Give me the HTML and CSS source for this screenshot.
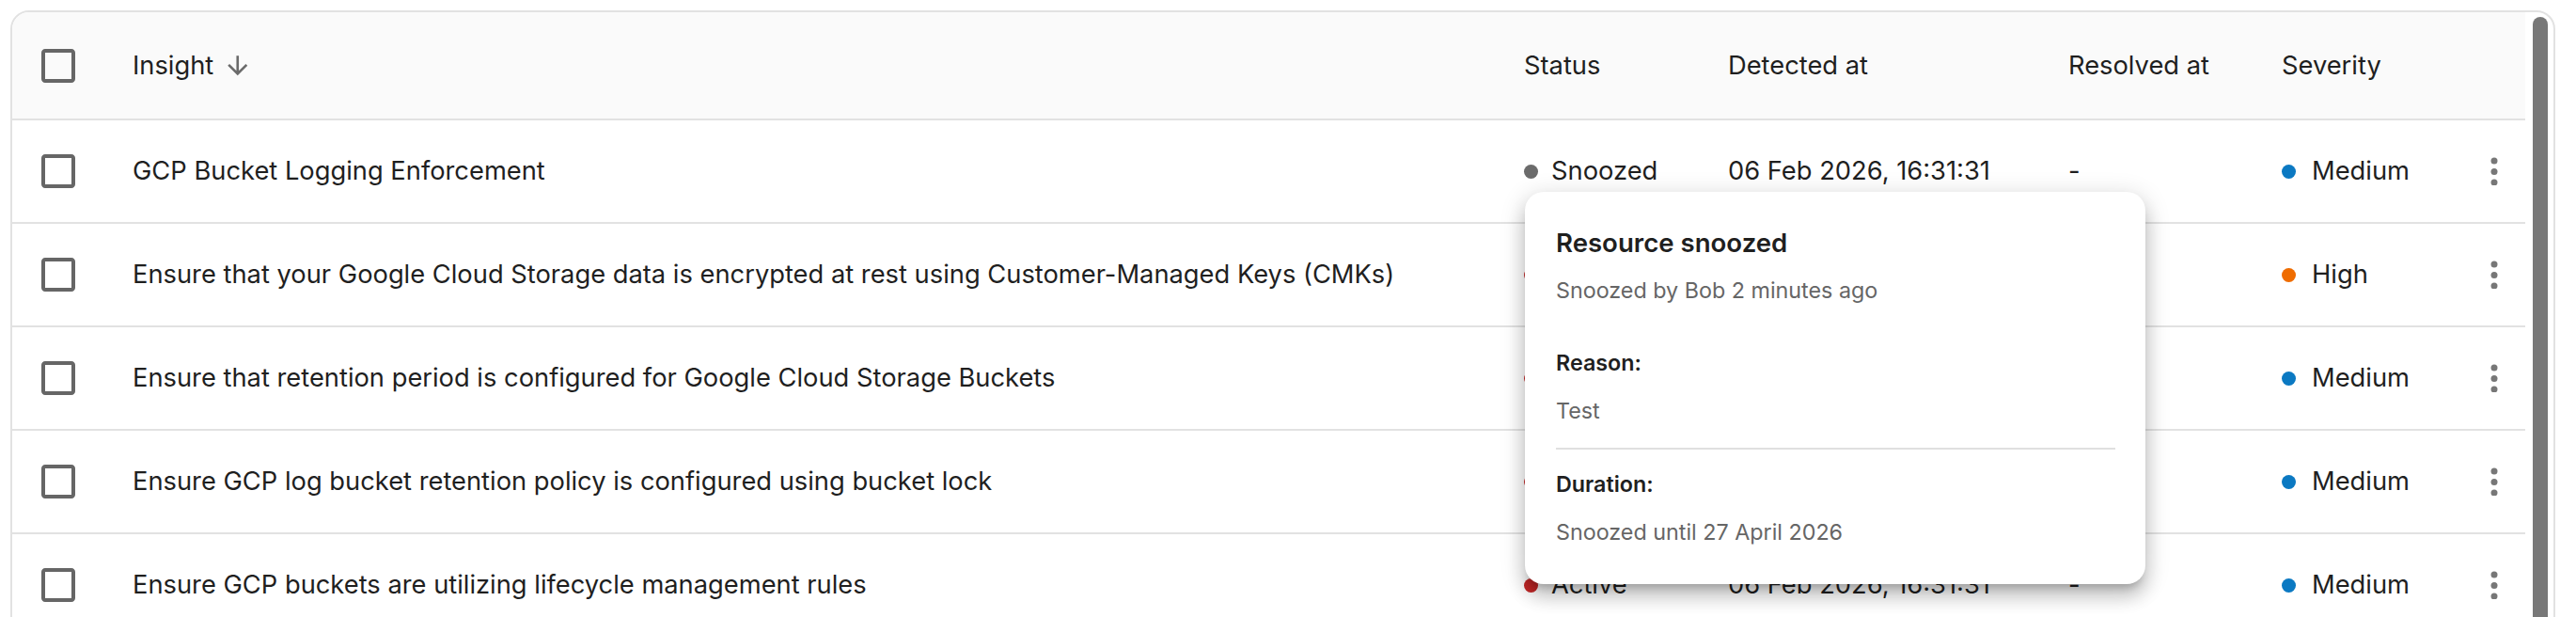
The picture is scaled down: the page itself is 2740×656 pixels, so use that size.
FILE: index.html
```html
<!DOCTYPE html>
<html lang="en">
<head>
<meta charset="utf-8">
<title>Insights</title>
<link rel="stylesheet" href="styles.css">
</head>
<body>
<div class="page">
  <div class="card">
    <div class="table">
      <div class="row head">
        <div class="cell cb"><svg class="check" viewBox="0 0 24 24"><path d="M19 5v14H5V5h14m0-2H5c-1.1 0-2 .9-2 2v14c0 1.1.9 2 2 2h14c1.1 0 2-.9 2-2V5c0-1.1-.9-2-2-2z"/></svg></div>
        <div class="cell insight">Insight <svg class="sort" viewBox="0 0 24 24"><path d="m20 12-1.410-1.410L13 16.170V4h-2v12.170l-5.580-5.590L4 12l8 8 8-8z"/></svg></div>
        <div class="cell">Status</div>
        <div class="cell">Detected at</div>
        <div class="cell">Resolved at</div>
        <div class="cell">Severity</div>
        <div class="cell"></div>
      </div>

      <div class="row">
        <div class="cell cb"><svg class="check" viewBox="0 0 24 24"><path d="M19 5v14H5V5h14m0-2H5c-1.1 0-2 .9-2 2v14c0 1.1.9 2 2 2h14c1.1 0 2-.9 2-2V5c0-1.1-.9-2-2-2z"/></svg></div>
        <div class="cell">GCP Bucket Logging Enforcement</div>
        <div class="cell status"><span class="dot dot-snoozed"></span>Snoozed</div>
        <div class="cell">06 Feb 2026, 16:31:31</div>
        <div class="cell">-</div>
        <div class="cell sev"><span class="dot dot-medium"></span>Medium</div>
        <div class="cell act"><svg class="kebab" viewBox="0 0 8 30"><circle cx="4" cy="4" r="3.5"/><circle cx="4" cy="15.5" r="3.5"/><circle cx="4" cy="27" r="3.5"/></svg></div>
      </div>

      <div class="row">
        <div class="cell cb"><svg class="check" viewBox="0 0 24 24"><path d="M19 5v14H5V5h14m0-2H5c-1.1 0-2 .9-2 2v14c0 1.1.9 2 2 2h14c1.1 0 2-.9 2-2V5c0-1.1-.9-2-2-2z"/></svg></div>
        <div class="cell">Ensure that your Google Cloud Storage data is encrypted at rest using Customer-Managed Keys (CMKs)</div>
        <div class="cell status"><span class="dot dot-active"></span>Active</div>
        <div class="cell">06 Feb 2026, 16:31:31</div>
        <div class="cell">-</div>
        <div class="cell sev"><span class="dot dot-high"></span>High</div>
        <div class="cell act"><svg class="kebab" viewBox="0 0 8 30"><circle cx="4" cy="4" r="3.5"/><circle cx="4" cy="15.5" r="3.5"/><circle cx="4" cy="27" r="3.5"/></svg></div>
      </div>

      <div class="row">
        <div class="cell cb"><svg class="check" viewBox="0 0 24 24"><path d="M19 5v14H5V5h14m0-2H5c-1.1 0-2 .9-2 2v14c0 1.1.9 2 2 2h14c1.1 0 2-.9 2-2V5c0-1.1-.9-2-2-2z"/></svg></div>
        <div class="cell">Ensure that retention period is configured for Google Cloud Storage Buckets</div>
        <div class="cell status"><span class="dot dot-active"></span>Active</div>
        <div class="cell">06 Feb 2026, 16:31:31</div>
        <div class="cell">-</div>
        <div class="cell sev"><span class="dot dot-medium"></span>Medium</div>
        <div class="cell act"><svg class="kebab" viewBox="0 0 8 30"><circle cx="4" cy="4" r="3.5"/><circle cx="4" cy="15.5" r="3.5"/><circle cx="4" cy="27" r="3.5"/></svg></div>
      </div>

      <div class="row">
        <div class="cell cb"><svg class="check" viewBox="0 0 24 24"><path d="M19 5v14H5V5h14m0-2H5c-1.1 0-2 .9-2 2v14c0 1.1.9 2 2 2h14c1.1 0 2-.9 2-2V5c0-1.1-.9-2-2-2z"/></svg></div>
        <div class="cell">Ensure GCP log bucket retention policy is configured using bucket lock</div>
        <div class="cell status"><span class="dot dot-active"></span>Active</div>
        <div class="cell">06 Feb 2026, 16:31:31</div>
        <div class="cell">-</div>
        <div class="cell sev"><span class="dot dot-medium"></span>Medium</div>
        <div class="cell act"><svg class="kebab" viewBox="0 0 8 30"><circle cx="4" cy="4" r="3.5"/><circle cx="4" cy="15.5" r="3.5"/><circle cx="4" cy="27" r="3.5"/></svg></div>
      </div>

      <div class="row">
        <div class="cell cb"><svg class="check" viewBox="0 0 24 24"><path d="M19 5v14H5V5h14m0-2H5c-1.1 0-2 .9-2 2v14c0 1.1.9 2 2 2h14c1.1 0 2-.9 2-2V5c0-1.1-.9-2-2-2z"/></svg></div>
        <div class="cell">Ensure GCP buckets are utilizing lifecycle management rules</div>
        <div class="cell status"><span class="dot dot-active"></span>Active</div>
        <div class="cell">06 Feb 2026, 16:31:31</div>
        <div class="cell">-</div>
        <div class="cell sev"><span class="dot dot-medium"></span>Medium</div>
        <div class="cell act"><svg class="kebab" viewBox="0 0 8 30"><circle cx="4" cy="4" r="3.5"/><circle cx="4" cy="15.5" r="3.5"/><circle cx="4" cy="27" r="3.5"/></svg></div>
      </div>
    </div>
    <div class="gutter"><div class="thumb"></div></div>
  </div>

  <div class="popover">
    <div class="pop-title">Resource snoozed</div>
    <div class="pop-sub">Snoozed by Bob 2 minutes ago</div>
    <div class="pop-label pop-reason">Reason:</div>
    <div class="pop-value">Test</div>
    <div class="pop-divider"></div>
    <div class="pop-label">Duration:</div>
    <div class="pop-value">Snoozed until 27 April 2026</div>
  </div>
</div>
</body>
</html>
```

FILE: styles.css
```css
html, body {
  margin: 0;
  padding: 0;
}

body {
  width: 2740px;
  height: 656px;
  overflow: hidden;
  background: #ffffff;
  font-family: "Inter", "Noto Sans", sans-serif;
  color: #1f1f1f;
}

.page {
  position: relative;
  padding: 11px 22px 0 11px;
}

.card {
  display: flex;
  border: 2px solid #e2e2e2;
  border-radius: 20px;
  overflow: hidden;
  background: #ffffff;
}

.table {
  flex: 1;
  min-width: 0;
}

.row {
  display: grid;
  grid-template-columns: 128px 1480px 217px 362px 227px 193px 1fr;
  align-items: center;
  height: 108px;
  border-bottom: 2px solid #e2e2e2;
  font-size: 27.3px;
  line-height: 40px;
}

.row.head {
  height: 113px;
  background: #fafafa;
  font-weight: 400;
}

.cell {
  display: flex;
  align-items: center;
  white-space: nowrap;
}

.cb {
  padding-left: 25px;
}

.check {
  width: 48px;
  height: 48px;
  fill: #666666;
}

.insight {
  gap: 10px;
}

.sort {
  width: 31.5px;
  height: 31.5px;
  fill: #6b6b6b;
}

.dot {
  display: inline-block;
  width: 15px;
  height: 15px;
  border-radius: 50%;
  flex: none;
}

.status .dot {
  margin-left: 0;
  margin-right: 14px;
}

.sev .dot {
  margin-left: 0;
  margin-right: 17px;
}

.dot-snoozed { background: #6b6b6b; }
.dot-active { background: #c62828; }
.dot-medium { background: #0b79c2; }
.dot-high { background: #ef6c00; }

.act {
  padding-left: 29px;
}

.kebab {
  width: 8px;
  height: 30px;
  fill: #777777;
}

.gutter {
  width: 30px;
  flex: none;
}

.thumb {
  margin: 5px 6px 0 8px;
  height: 800px;
  background: #787878;
  border-radius: 8px 8px 0 0;
}

.popover {
  position: absolute;
  left: 1622px;
  top: 204px;
  width: 660px;
  box-sizing: border-box;
  padding: 34px 32px 37px 33px;
  background: #ffffff;
  border-radius: 20px;
  box-shadow: 0 9px 9px -5px rgba(0, 0, 0, 0.2),
              0 14px 18px 2px rgba(0, 0, 0, 0.14),
              0 5px 25px 4px rgba(0, 0, 0, 0.12);
}

.pop-title {
  font-size: 27.6px;
  line-height: 40px;
  font-weight: 600;
  color: #1f1f1f;
}

.pop-sub {
  margin-top: 13px;
  font-size: 23.3px;
  line-height: 36px;
  color: #666666;
}

.pop-label {
  font-size: 23.3px;
  line-height: 36px;
  font-weight: 600;
  color: #1f1f1f;
}

.pop-reason {
  margin-top: 41px;
}

.pop-value {
  margin-top: 15px;
  font-size: 23.3px;
  line-height: 36px;
  color: #666666;
}

.pop-divider {
  height: 2px;
  background: #e0e0e0;
  margin: 21px 0 19px;
}
```
